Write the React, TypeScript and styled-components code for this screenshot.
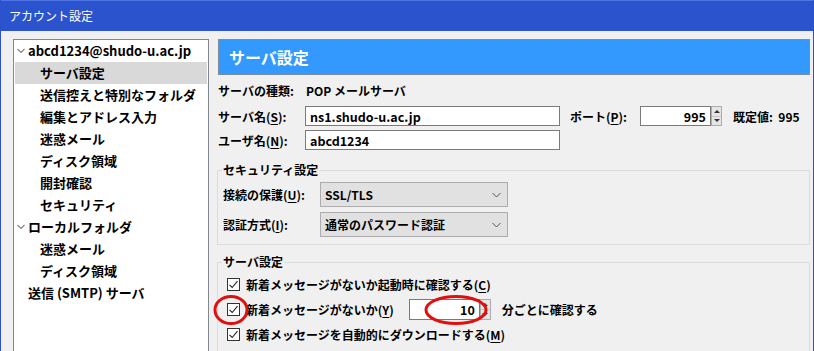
import React from 'react';
import styled, { createGlobalStyle } from 'styled-components';

const Global = createGlobalStyle`
  html, body { margin: 0; padding: 0; background: #f0f0f0; }
  body {
    font-family: "Noto Sans CJK JP", "Noto Sans", sans-serif;
    font-size: 12px;
    color: #000;
  }
  * { box-sizing: border-box; }
`;

const Window = styled.div`
  width: 814px;
  height: 351px;
  overflow: hidden;
  border-left: 1px solid #2b52cc;
  border-right: 1px solid #2b52cc;
  background: #f0f0f0;
  display: flex;
  flex-direction: column;
`;

const TitleBar = styled.div`
  height: 31px;
  flex: none;
  background: #2b53cd;
  border-top: 1px solid #4f76e6;
  color: #fff;
  font-size: 12px;
  font-weight: 400;
  display: flex;
  align-items: center;
  padding-left: 8px;
  padding-bottom: 1px;
`;

const Body = styled.div`
  flex: 1;
  display: flex;
  gap: 9px;
  padding: 8px 0 0 12px;
  min-height: 0;
`;

const Tree = styled.div`
  width: 196px;
  height: 340px;
  flex: none;
  background: #fff;
  border: 1px solid #828790;
  padding: 0 1px;
  font-weight: 700;
  font-size: 13px;
`;

const TreeRow = styled.div<{ $level: number; $selected?: boolean }>`
  height: 22px;
  line-height: 22px;
  display: flex;
  align-items: center;
  gap: 3px;
  padding-left: ${p => (p.$level === 0 ? 2 : p.$level === 1 ? 25 : 13)}px;
  background: ${p => (p.$selected ? '#d9d9d9' : 'transparent')};
  white-space: nowrap;
  overflow: hidden;
`;

const Chevron = styled.svg`
  width: 8px;
  height: 6px;
  flex: none;
`;

const Right = styled.div`
  width: 592px;
  flex: none;
  display: flex;
  flex-direction: column;
  font-weight: 700;
  & > * { flex-shrink: 0; }
`;

const Header = styled.div`
  height: 36px;
  background: #3399ff;
  border: 1px solid #7f8c99;
  color: #fff;
  font-size: 16px;
  display: flex;
  align-items: center;
  padding-left: 10px;
`;

const FormRow = styled.div<{ $mt?: number; $h?: number }>`
  height: ${p => p.$h ?? 22}px;
  margin-top: ${p => p.$mt ?? 2}px;
  display: flex;
  align-items: center;
  white-space: nowrap;
`;

const Label = styled.span<{ $w?: number; $ml?: number }>`
  width: ${p => (p.$w ? `${p.$w}px` : 'auto')};
  margin-left: ${p => p.$ml ?? 0}px;
  flex: none;
`;

const TextBox = styled.div<{ $w: number; $h?: number; $ml?: number; $align?: string }>`
  width: ${p => p.$w}px;
  height: ${p => p.$h ?? 20}px;
  margin-left: ${p => p.$ml ?? 0}px;
  background: #fff;
  border: 1px solid #7a7a7a;
  display: flex;
  align-items: center;
  justify-content: ${p => p.$align ?? 'flex-start'};
  padding: 0 4px;
  font-size: 12.5px;
  flex: none;
`;

const Spin = styled.div<{ $h: number }>`
  width: 11px;
  height: ${p => p.$h}px;
  display: flex;
  flex-direction: column;
  flex: none;
  border: 1px solid #adadad;
  background: #e5e5e5;
`;

const SpinHalf = styled.div<{ $up?: boolean }>`
  flex: 1;
  display: flex;
  align-items: center;
  justify-content: center;
  border-top: ${p => (p.$up ? 'none' : '1px solid #c8c8c8')};
  &::after {
    content: '';
    border-left: 3px solid transparent;
    border-right: 3px solid transparent;
    ${p => (p.$up ? 'border-bottom: 3px solid #333;' : 'border-top: 3px solid #333;')}
  }
`;

const Group = styled.fieldset<{ $mt: number; $pt: number; $pb: number }>`
  margin: ${p => p.$mt}px 0 0 -1px;
  border: 1px solid #dcdcdc;
  padding: ${p => p.$pt}px 6px ${p => p.$pb}px 5px;
  min-width: 0;
`;

const Legend = styled.legend`
  padding: 0 1px;
  margin-left: -1px;
  line-height: 16px;
  font-size: 12px;
`;

const SelectBox = styled.div`
  width: 188px;
  height: 25px;
  background: #e1e1e1;
  border: 1px solid #adadad;
  display: flex;
  align-items: center;
  justify-content: space-between;
  padding: 0 6px 0 4px;
  flex: none;
`;

const CheckRow = styled.div`
  height: 25px;
  display: flex;
  align-items: center;
  white-space: nowrap;
  position: relative;
  padding-left: 4px;
`;

const Box = styled.span`
  width: 13px;
  height: 13px;
  border: 1px solid #333;
  background: #fff;
  display: inline-flex;
  align-items: center;
  justify-content: center;
  margin-right: 6px;
  flex: none;
`;

const Suffix = styled.span`
  margin-left: 11px;
`;

const Ring = styled.svg<{ $left: number; $w: number }>`
  position: absolute;
  left: ${p => p.$left}px;
  top: -2px;
  width: ${p => p.$w}px;
  height: 30px;
  pointer-events: none;
  overflow: visible;
`;

const U = styled.span`
  text-decoration: underline;
  text-underline-offset: 2px;
`;

const Cb = () => (
  <Box>
    <svg width="11" height="11" viewBox="0 0 11 11">
      <path d="M1.5 5.8 L4.2 8.5 L9.5 2.2" fill="none" stroke="#222" strokeWidth="1.1" />
    </svg>
  </Box>
);

const Chev = () => (
  <Chevron viewBox="0 0 8 6">
    <path d="M0.5 1 L4 4.5 L7.5 1" fill="none" stroke="#808080" strokeWidth="1.1" />
  </Chevron>
);

const SelChev = () => (
  <svg width="9" height="6" viewBox="0 0 9 6">
    <path d="M0.5 1 L4.5 5 L8.5 1" fill="none" stroke="#555" strokeWidth="1" />
  </svg>
);

const tree: { t: string; level: number; sel?: boolean }[] = [
  { t: 'abcd1234@shudo-u.ac.jp', level: 0 },
  { t: 'サーバ設定', level: 1, sel: true },
  { t: '送信控えと特別なフォルダ', level: 1 },
  { t: '編集とアドレス入力', level: 1 },
  { t: '迷惑メール', level: 1 },
  { t: 'ディスク領域', level: 1 },
  { t: '開封確認', level: 1 },
  { t: 'セキュリティ', level: 1 },
  { t: 'ローカルフォルダ', level: 0 },
  { t: '迷惑メール', level: 1 },
  { t: 'ディスク領域', level: 1 },
  { t: '送信 (SMTP) サーバ', level: 2 },
];

export default function App() {
  return (
    <>
      <Global />
      <Window>
        <TitleBar>アカウント設定</TitleBar>
        <Body>
          <Tree>
            {tree.map((r, i) => (
              <TreeRow key={i} $level={r.level} $selected={r.sel}>
                {r.level === 0 && <Chev />}
                {r.t}
              </TreeRow>
            ))}
          </Tree>
          <Right>
            <Header>サーバ設定</Header>
            <FormRow $mt={4}>
              <Label $w={88}>サーバの種類:</Label>
              <span>POP メールサーバ</span>
            </FormRow>
            <FormRow $mt={4}>
              <Label $w={87}>
                サーバ名(<U>S</U>):
              </Label>
              <TextBox $w={255}>ns1.shudo-u.ac.jp</TextBox>
              <Label $w={70} $ml={10}>
                ポート(<U>P</U>):
              </Label>
              <TextBox $w={71} $align="flex-end">995</TextBox>
              <Spin $h={20}>
                <SpinHalf $up />
                <SpinHalf />
              </Spin>
              <Label $ml={11}>既定値:&nbsp;&nbsp;995</Label>
            </FormRow>
            <FormRow>
              <Label $w={87}>
                ユーザ名(<U>N</U>):
              </Label>
              <TextBox $w={255}>abcd1234</TextBox>
            </FormRow>
            <Group $mt={11} $pt={4} $pb={7}>
              <Legend>セキュリティ設定</Legend>
              <FormRow $mt={0} $h={25}>
                <Label $w={97}>
                  接続の保護(<U>U</U>):
                </Label>
                <SelectBox>
                  SSL/TLS
                  <SelChev />
                </SelectBox>
              </FormRow>
              <FormRow $mt={5} $h={25}>
                <Label $w={97}>
                  認証方式(<U>I</U>):
                </Label>
                <SelectBox>
                  通常のパスワード認証
                  <SelChev />
                </SelectBox>
              </FormRow>
            </Group>
            <Group $mt={9} $pt={2} $pb={5}>
              <Legend>サーバ設定</Legend>
              <CheckRow>
                <Cb />
                新着メッセージがないか起動時に確認する(<U>C</U>)
              </CheckRow>
              <CheckRow>
                <Cb />
                新着メッセージがないか(<U>Y</U>)
                <TextBox $w={71} $h={21} $ml={15} $align="flex-end">
                  10
                </TextBox>
                <Spin $h={21}>
                  <SpinHalf $up />
                  <SpinHalf />
                </Spin>
                <Suffix>分ごとに確認する</Suffix>
                <Ring $left={-9} $w={34} viewBox="0 0 34 30">
                  <ellipse cx="17" cy="15" rx="16" ry="13.5" fill="none" stroke="#e01010" strokeWidth="3" />
                </Ring>
                <Ring $left={202} $w={62} viewBox="0 0 62 30">
                  <ellipse cx="31" cy="15" rx="30" ry="13.5" fill="none" stroke="#e01010" strokeWidth="3" />
                </Ring>
              </CheckRow>
              <CheckRow>
                <Cb />
                新着メッセージを自動的にダウンロードする(<U>M</U>)
              </CheckRow>
              <CheckRow>
                <Cb />
                メッセージを取得するまで
              </CheckRow>
            </Group>
          </Right>
        </Body>
      </Window>
    </>
  );
}
